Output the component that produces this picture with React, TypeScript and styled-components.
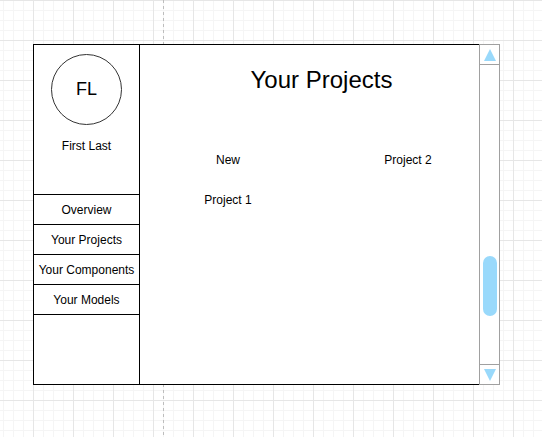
import React from "react";
import styled, { createGlobalStyle } from "styled-components";

const GlobalStyle = createGlobalStyle`
  html, body {
    margin: 0;
    padding: 0;
    background: #fff;
  }
  * {
    box-sizing: border-box;
  }
`;

const Canvas = styled.div`
  position: relative;
  width: 542px;
  height: 437px;
  overflow: hidden;
  padding: 44px 0 0 33px;
  font-family: "Liberation Sans", Arial, Helvetica, sans-serif;
  color: #000;
  background-color: #fff;
  background-image:
    linear-gradient(to right, #e6e6e6 1px, transparent 1px),
    linear-gradient(to bottom, #e6e6e6 1px, transparent 1px),
    linear-gradient(to right, #f5f5f5 1px, transparent 1px),
    linear-gradient(to bottom, #f5f5f5 1px, transparent 1px);
  background-size: 40px 40px, 40px 40px, 10px 10px, 10px 10px;
  background-position: 33px 0, 33px 0, 33px 0, 33px 0;
`;

const Guide = styled.div`
  position: absolute;
  top: 0;
  bottom: 0;
  left: 163px;
  width: 1px;
  background: repeating-linear-gradient(
    to bottom,
    #bdbdbd 0 3px,
    transparent 3px 6px
  );
`;

const Frame = styled.div`
  position: relative;
  display: flex;
  align-items: stretch;
`;

const Window = styled.div`
  display: flex;
  flex: 0 0 447px;
  width: 447px;
  height: 341px;
  border: 1px solid #000;
  background: #fff;
`;

const Sidebar = styled.aside`
  display: flex;
  flex-direction: column;
  flex: 0 0 106px;
  width: 106px;
  border-right: 1px solid #000;
`;

const Profile = styled.div`
  display: flex;
  flex-direction: column;
  align-items: center;
  height: 149px;
  padding-top: 9px;
`;

const Avatar = styled.div`
  display: flex;
  align-items: center;
  justify-content: center;
  width: 71px;
  height: 71px;
  border: 1px solid #333;
  border-radius: 50%;
  font-size: 18px;
`;

const UserName = styled.div`
  margin-top: 14px;
  font-size: 12px;
  line-height: 14px;
`;

const Nav = styled.nav`
  display: flex;
  flex-direction: column;
  border-bottom: 1px solid #000;
`;

const NavItem = styled.div`
  display: flex;
  align-items: center;
  justify-content: center;
  height: 30px;
  border-top: 1px solid #000;
  font-size: 12px;
  white-space: nowrap;
`;

const Content = styled.main`
  flex: 1;
  min-width: 0;
  display: flex;
  flex-direction: column;
  padding-top: 21px;
`;

const Title = styled.h1`
  margin: 0 0 0 24px;
  font-size: 24px;
  font-weight: 400;
  line-height: 28px;
  text-align: center;
`;

const Projects = styled.div`
  display: grid;
  grid-template-columns: repeat(2, 176px);
  grid-auto-rows: 14px;
  column-gap: 4px;
  row-gap: 26px;
  margin-top: 59px;
`;

const ProjectTile = styled.div`
  font-size: 12px;
  line-height: 14px;
  text-align: center;
`;

const ScrollBar = styled.div`
  display: flex;
  flex-direction: column;
  flex: 0 0 21px;
  width: 21px;
  height: 341px;
  margin-left: -1px;
  border: 1px solid #a0a0a0;
  background: #fff;
`;

const ScrollButton = styled.div<{ $down?: boolean }>`
  display: flex;
  align-items: center;
  justify-content: center;
  height: 20px;
  ${(p) =>
    p.$down
      ? "border-top: 1px solid #a0a0a0;"
      : "border-bottom: 1px solid #a0a0a0;"}
`;

const Track = styled.div`
  flex: 1;
  display: flex;
  flex-direction: column;
  align-items: center;
`;

const Thumb = styled.div`
  width: 14px;
  height: 60px;
  border-radius: 7px;
  background: #99d9fb;
`;

const Arrow: React.FC<{ down?: boolean }> = ({ down }) => (
  <svg width="12" height="12" viewBox="0 0 12 12">
    <polygon
      points={down ? "0,0 12,0 6,12" : "6,0 12,12 0,12"}
      fill="#99d9fb"
    />
  </svg>
);

const navItems = ["Overview", "Your Projects", "Your Components", "Your Models"];
const projects = ["New", "Project 2", "Project 1"];

const TRACK = 299;
const THUMB = 60;
const scroll = 0.8;

export default function App() {
  return (
    <>
      <GlobalStyle />
      <Canvas>
        <Guide />
        <Frame>
          <Window>
            <Sidebar>
              <Profile>
                <Avatar>FL</Avatar>
                <UserName>First Last</UserName>
              </Profile>
              <Nav>
                {navItems.map((item) => (
                  <NavItem key={item}>{item}</NavItem>
                ))}
              </Nav>
            </Sidebar>
            <Content>
              <Title>Your Projects</Title>
              <Projects>
                {projects.map((p) => (
                  <ProjectTile key={p}>{p}</ProjectTile>
                ))}
              </Projects>
            </Content>
          </Window>
          <ScrollBar>
            <ScrollButton>
              <Arrow />
            </ScrollButton>
            <Track>
              <Thumb style={{ marginTop: Math.round((TRACK - THUMB) * scroll) }} />
            </Track>
            <ScrollButton $down>
              <Arrow down />
            </ScrollButton>
          </ScrollBar>
        </Frame>
      </Canvas>
    </>
  );
}
